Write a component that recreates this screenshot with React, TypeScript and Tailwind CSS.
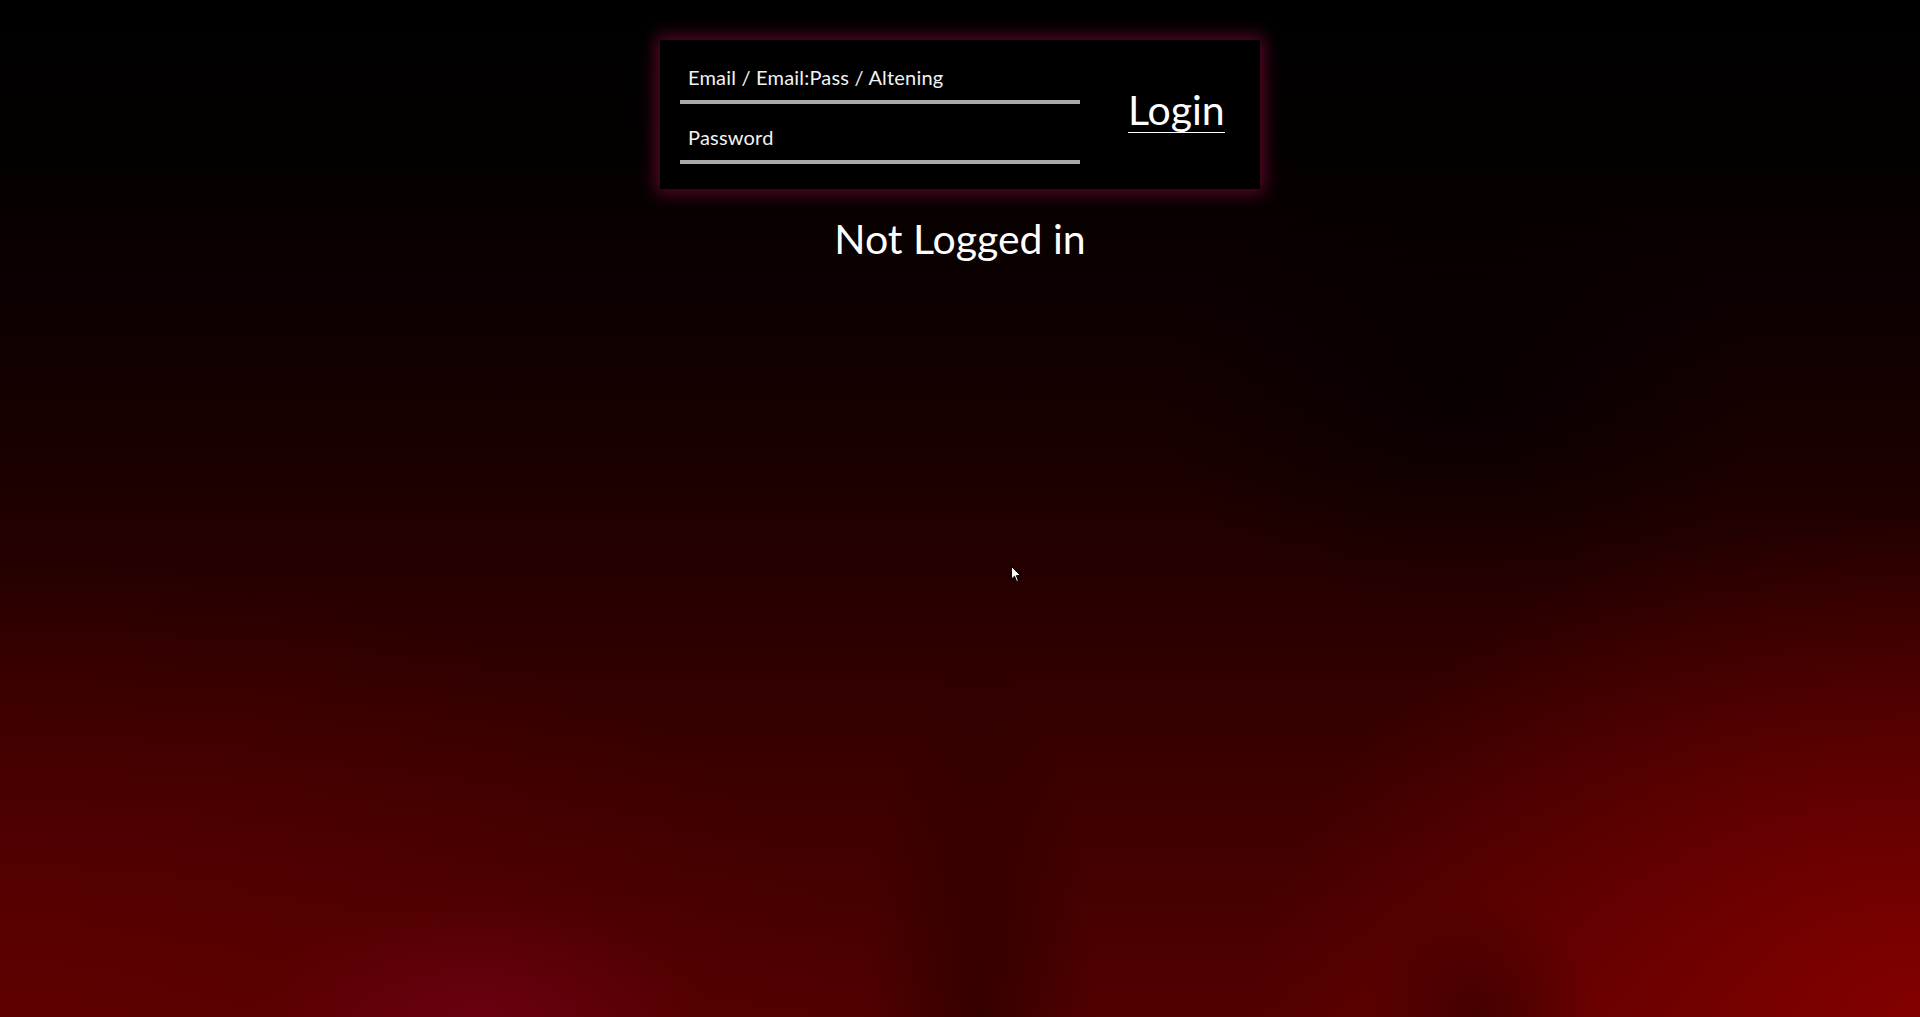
export default function App() {
  return (
    <div className="relative h-[1017px] w-full overflow-hidden bg-black bg-[image:radial-gradient(ellipse_12%_12%_at_25%_100%,rgba(120,0,30,0.55),transparent),radial-gradient(ellipse_6%_35%_at_51%_100%,rgba(30,0,0,0.55),transparent),radial-gradient(ellipse_6%_12%_at_77%_100%,rgba(40,0,0,0.5),transparent),radial-gradient(ellipse_16%_22%_at_76%_38%,rgba(0,0,0,0.6),transparent),radial-gradient(ellipse_35%_50%_at_100%_100%,rgba(140,0,0,0.85),transparent),radial-gradient(ellipse_45%_45%_at_0%_100%,rgba(105,0,0,0.6),transparent),linear-gradient(to_bottom,#000_0%,#050000_16%,#0e0000_30%,#1a0000_45%,#2a0000_60%,#3a0000_75%,#520000_100%)] font-['Lato',sans-serif] text-white">
      <div className="flex flex-col items-center pt-[40px]">
        <div className="flex h-[149px] w-[600px] items-start bg-black px-[20px] pt-[14px] shadow-[0_0_16px_4px_rgba(120,8,55,0.75)]">
          <div className="flex w-[400px] flex-col gap-[10px]">
            <input
              type="text"
              placeholder="Email / Email:Pass / Altening"
              className="h-[50px] w-full border-b-4 border-[#a9a9a9] bg-transparent px-[8px] text-[20px] tracking-[0.2px] text-white outline-none placeholder:text-[#f2f2f2]"
            />
            <input
              type="password"
              placeholder="Password"
              className="h-[50px] w-full border-b-4 border-[#a9a9a9] bg-transparent px-[8px] text-[20px] tracking-[0.2px] text-white outline-none placeholder:text-[#f2f2f2]"
            />
          </div>
          <button type="button" className="ml-[48px] mt-[33px] border-b border-white text-[41px] leading-[45px] text-white">
            Login
          </button>
        </div>
        <div className="mt-[26px] text-[41px] leading-[48px]">Not Logged in</div>
      </div>
      <svg className="absolute left-[1011px] top-[566px]" width="11" height="17" viewBox="0 0 11 17">
        <path d="M0.5 0.5 L0.5 13 L3.5 10.2 L5.6 15.5 L7.4 14.8 L5.4 9.6 L9.5 9.6 Z" fill="#fff" stroke="#000" strokeWidth="1" />
      </svg>
    </div>
  );
}
